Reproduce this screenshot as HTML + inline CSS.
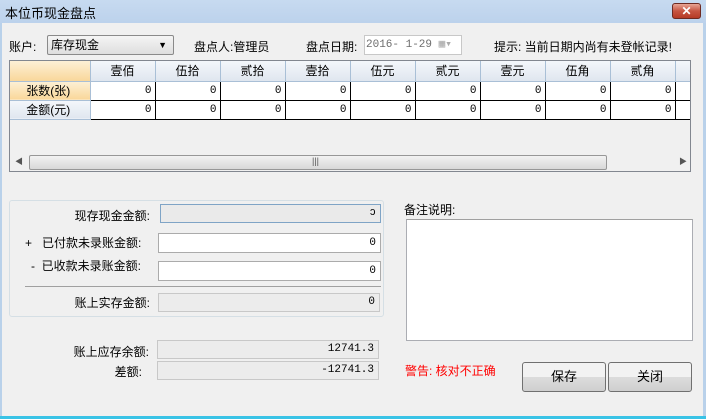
<!DOCTYPE html>
<html><head><meta charset="utf-8"><style>
*{box-sizing:border-box;margin:0;padding:0}
body{width:706px;height:419px;overflow:hidden;background:#b9d1ea;font-family:"Liberation Sans","Noto Sans CJK SC",sans-serif;font-size:12px;color:#000;position:relative}
.a{position:absolute}
#title{left:0;top:0;width:706px;height:23px;background:linear-gradient(#c7daf0,#bcd2ec)}
#body{left:2px;top:23px;width:701px;height:393px;background:#f0f0f0}
.f{position:absolute;border:1px solid #ababab;background:#fff;text-align:right;padding-right:4px;font-family:"Liberation Mono","Noto Sans CJK SC",monospace;font-size:11px;line-height:16px}
.g{background:#ececec;border-color:#c8c8c8}
.lbl{position:absolute;text-align:right;white-space:nowrap}
table{border-collapse:collapse;position:absolute;left:10px;top:61px;font-size:12px}
td{height:19px;border:1px solid #000;width:65px;text-align:right;padding-right:3px;font-family:"Liberation Mono",monospace;font-size:11px;background:#fff}
th{height:20px;font-weight:normal;background:linear-gradient(#f4f7fb,#dfe6ef);border-right:1px solid #a9bfd6;border-bottom:1px solid #a9bfd6;width:65px}
th.rh{width:80px;background:linear-gradient(#fdf0d6,#f9d79a)}
td.rh{background:linear-gradient(#f4f7fb,#dfe6ef);text-align:center;font-family:"Liberation Sans","Noto Sans CJK SC",sans-serif;font-size:12px;border:none;border-right:1px solid #a9bfd6;border-bottom:1px solid #a9bfd6}
td.rh.o{background:linear-gradient(#fdf0d6,#f9d79a)}
.btn{position:absolute;border:1px solid #707070;border-radius:3px;background:linear-gradient(#f2f2f2 50%,#dcdcdc 50%,#cfcfcf);text-align:center;line-height:28px;font-size:13px}
</style></head><body>
<div id="title" class="a"><span class="a" style="left:5px;top:3px;font-size:13px">本位币现金盘点</span>
<div class="a" style="left:672px;top:3px;width:29px;height:16px;border:1px solid #6d2a22;border-radius:3px;background:linear-gradient(#e8a595,#c75542 50%,#b53a26);color:#fff;text-align:center;font-size:12px;line-height:14px;font-weight:bold">✕</div></div>
<div id="body" class="a"></div>
<span class="a" style="left:9px;top:38px">账户:</span>
<div class="a" style="left:47px;top:35px;width:127px;height:20px;border:1px solid #8a8a8a;border-radius:2px;background:linear-gradient(#f5f5f5,#dedede);padding-left:3px;line-height:18px">库存现金<span class="a" style="right:6px;top:0;font-size:9px">▼</span></div>
<span class="a" style="left:194px;top:38px">盘点人:管理员</span>
<span class="a" style="left:306px;top:38px">盘点日期:</span>
<div class="a" style="left:364px;top:35px;width:98px;height:20px;border:1px solid #c8c8c8;background:#fff;color:#6d6d6d;font-family:'Liberation Mono',monospace;font-size:11px;line-height:18px;padding-left:1px">2016- 1-29 <span style="color:#aaa">▦▾</span></div>
<span class="a" style="left:494px;top:38px">提示: 当前日期内尚有未登帐记录!</span>
<div class="a" style="left:9px;top:60px;width:682px;height:112px;border:1px solid #828790;background:#f0f0f0"></div>
<table>
<tr><th class="rh"></th><th>壹佰</th><th>伍拾</th><th>贰拾</th><th>壹拾</th><th>伍元</th><th>贰元</th><th>壹元</th><th>伍角</th><th>贰角</th><th style="width:15px;border-right:none"></th></tr>
<tr><td class="rh o">张数(张)</td><td>0</td><td>0</td><td>0</td><td>0</td><td>0</td><td>0</td><td>0</td><td>0</td><td>0</td><td style="width:15px;border-right:none"></td></tr>
<tr><td class="rh">金额(元)</td><td>0</td><td>0</td><td>0</td><td>0</td><td>0</td><td>0</td><td>0</td><td>0</td><td>0</td><td style="width:15px;border-right:none"></td></tr>
</table>
<div class="a" style="left:10px;top:154px;width:680px;height:17px;background:#f0f0f0"></div>
<span class="a" style="left:15px;top:156px;font-size:8px;color:#555">◀</span>
<div class="a" style="left:29px;top:155px;width:578px;height:15px;border:1px solid #979797;border-radius:2px;background:linear-gradient(#f2f2f2,#d8d8d8)"><span class="a" style="left:282px;top:0;font-size:9px;color:#555">|||</span></div>
<span class="a" style="left:679px;top:156px;font-size:8px;color:#555">▶</span>
<div class="a" style="left:9px;top:200px;width:375px;height:117px;border:1px solid #d5dfe5;border-radius:3px"></div>
<span class="lbl" style="right:556px;top:207px">现存现金金额:</span>
<div class="f g" style="left:160px;top:204px;width:221px;height:19px;border-color:#7fa4c6;background:#eaeaea">ↄ</div>
<span class="lbl" style="left:25px;top:234px">+&nbsp;&nbsp; 已付款未录账金额:</span>
<div class="f" style="left:158px;top:233px;width:223px;height:20px;line-height:18px">0</div>
<span class="lbl" style="left:31px;top:257px">-&nbsp; 已收款未录账金额:</span>
<div class="f" style="left:158px;top:261px;width:223px;height:20px;line-height:18px">0</div>
<div class="a" style="left:25px;top:286px;width:356px;height:1px;background:#a0a0a0"></div>
<span class="lbl" style="right:556px;top:294px">账上实存金额:</span>
<div class="f g" style="left:158px;top:293px;width:222px;height:19px">0</div>
<span class="lbl" style="right:557px;top:343px">账上应存余额:</span>
<div class="f g" style="left:157px;top:340px;width:222px;height:19px">12741.3</div>
<span class="lbl" style="right:564px;top:363px">差额:</span>
<div class="f g" style="left:157px;top:361px;width:222px;height:19px">-12741.3</div>
<span class="a" style="left:404px;top:201px">备注说明:</span>
<div class="a" style="left:406px;top:219px;width:287px;height:122px;border:1px solid #abadb3;border-top-color:#a0a0a0;background:#fff"></div>
<span class="a" style="left:405px;top:362px;color:#f00">警告: 核对不正确</span>
<div class="btn" style="left:522px;top:362px;width:84px;height:30px">保存</div>
<div class="btn" style="left:608px;top:362px;width:84px;height:30px">关闭</div>
<div class="a" style="left:0;top:416px;width:706px;height:3px;background:#39c3e6"></div>
</body></html>
